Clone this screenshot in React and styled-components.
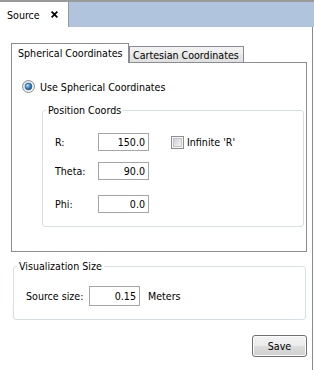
import React from "react";
import styled, { createGlobalStyle } from "styled-components";

const FONT = `"DejaVu Sans Condensed", "Liberation Sans", Arial, sans-serif`;

const GlobalStyle = createGlobalStyle`
  html, body { margin: 0; padding: 0; background: #ffffff; }
  body { font-family: ${FONT}; font-size: 10.6px; color: #000; white-space: nowrap; }
  * { box-sizing: border-box; }
`;

const Window = styled.div`
  width: 314px;
  height: 370px;
  display: flex;
  flex-direction: column;
`;

const Header = styled.div`
  display: flex;
  height: 27px;
  border-top: 2px solid #9a9a9a;
`;

const DocTab = styled.div`
  width: 69px;
  display: flex;
  align-items: center;
  padding-left: 7px;
  background: #ffffff;
  border-right: 1px solid #9a9a9a;
`;

const DocTabTitle = styled.span`
  margin-right: 11px;
`;

const HeaderFill = styled.div`
  flex: 1;
  background: #b0c4de;
`;

const Body = styled.div`
  flex: 1;
  width: 313px;
  border-right: 1px solid #8a8a8a;
  padding: 16px 5px 0 11px;
  display: flex;
  flex-direction: column;
`;

const TabBar = styled.div`
  display: flex;
  align-items: flex-end;
  height: 20px;
  margin-bottom: -1px;
  position: relative;
  z-index: 1;
`;

const Tab = styled.div`
  width: ${(p) => p.$w}px;
  height: ${(p) => (p.$active ? 20 : 17)}px;
  display: flex;
  align-items: center;
  padding-left: ${(p) => (p.$active ? 6 : 3)}px;
  border: 1px solid #898c95;
  border-bottom: ${(p) => (p.$active ? "none" : "1px solid #898c95")};
  background: ${(p) =>
    p.$active ? "#ffffff" : "linear-gradient(#f2f2f2, #ececec 50%, #e6e6e6 51%, #e0e0e0)"};
  padding-bottom: ${(p) => (p.$active ? 1 : 0)}px;
`;

const Pane = styled.div`
  height: 190px;
  border: 1px solid #898c95;
  background: #ffffff;
  padding: 17px 0 0 10px;
  display: flex;
  flex-direction: column;
`;

const RadioRow = styled.label`
  display: flex;
  align-items: center;
  gap: 5px;
  height: 13px;
`;

const Group = styled.fieldset`
  margin: ${(p) => p.$margin};
  padding: 0;
  border: 1px solid #d5dfe5;
  border-radius: 3px;
  min-width: 0;
`;

const Legend = styled.legend`
  margin-left: 3px;
  padding: 0 2px;
  line-height: 13px;
`;

const GroupContent = styled.div`
  padding: ${(p) => p.$pad};
  display: flex;
  flex-direction: column;
`;

const FieldRow = styled.div`
  display: flex;
  align-items: center;
  margin-top: ${(p) => p.$mt || 0}px;
`;

const FieldLabel = styled.span`
  width: ${(p) => p.$w}px;
  flex-shrink: 0;
`;

const SpinBox = styled.div`
  width: ${(p) => p.$w}px;
  height: ${(p) => p.$h}px;
  border: 1px solid #a5a5a5;
  background: #ffffff;
  display: flex;
  align-items: center;
  justify-content: flex-end;
  padding-right: 3px;
`;

const CheckLabel = styled.label`
  display: flex;
  align-items: center;
  gap: 3px;
  margin-left: 22px;
`;

const Unit = styled.span`
  margin-left: 8px;
`;

const Footer = styled.div`
  display: flex;
  justify-content: flex-end;
  margin-top: 15px;
`;

const Button = styled.button`
  width: 55px;
  height: 22px;
  font: inherit;
  color: #000;
  border: 1px solid #707070;
  border-radius: 3px;
  background: linear-gradient(#f2f2f2, #ebebeb 50%, #dddddd 51%, #cfcfcf);
  box-shadow: inset 0 0 0 1px #fcfcfc;
  padding: 0;
`;

const CloseIcon = () => (
  <svg width="7" height="7" viewBox="0 0 7 7">
    <path d="M1.2 1.2 L5.8 5.8 M5.8 1.2 L1.2 5.8" stroke="#000" strokeWidth="1.7" strokeLinecap="square" />
  </svg>
);

const RadioIcon = () => (
  <svg width="13" height="13" viewBox="0 0 13 13">
    <defs>
      <linearGradient id="rbg" x1="0" y1="0" x2="1" y2="1">
        <stop offset="0" stopColor="#d8d8d8" />
        <stop offset="1" stopColor="#ffffff" />
      </linearGradient>
      <radialGradient id="rdot" cx="0.35" cy="0.35" r="0.75">
        <stop offset="0" stopColor="#b6e4fb" />
        <stop offset="0.5" stopColor="#3a8ad0" />
        <stop offset="1" stopColor="#13457e" />
      </radialGradient>
    </defs>
    <circle cx="6.5" cy="6.5" r="6" fill="url(#rbg)" stroke="#8e8f8f" />
    <circle cx="6.5" cy="6.5" r="3.4" fill="url(#rdot)" stroke="#20507f" strokeWidth="0.6" />
  </svg>
);

const CheckIcon = () => (
  <svg width="13" height="13" viewBox="0 0 13 13">
    <defs>
      <linearGradient id="cbg" x1="0" y1="0" x2="1" y2="1">
        <stop offset="0" stopColor="#cbcfd5" />
        <stop offset="1" stopColor="#f6f6f6" />
      </linearGradient>
    </defs>
    <rect x="0.5" y="0.5" width="12" height="12" fill="#f4f4f4" stroke="#8e8f8f" />
    <rect x="2.5" y="2.5" width="8" height="8" fill="url(#cbg)" stroke="#b9bcc1" strokeWidth="0.8" />
  </svg>
);

export default function App() {
  return (
    <>
      <GlobalStyle />
      <Window>
        <Header>
          <DocTab>
            <DocTabTitle>Source</DocTabTitle>
            <CloseIcon />
          </DocTab>
          <HeaderFill />
        </Header>
        <Body>
          <TabBar>
            <Tab $active $w={118}>Spherical Coordinates</Tab>
            <Tab $w={115}>Cartesian Coordinates</Tab>
          </TabBar>
          <Pane>
            <RadioRow>
              <RadioIcon />
              <span>Use Spherical Coordinates</span>
            </RadioRow>
            <Group $margin="11px 2px 0 20px">
              <Legend>Position Coords</Legend>
              <GroupContent $pad="16px 0 13px 12px">
                <FieldRow>
                  <FieldLabel $w={43}>R:</FieldLabel>
                  <SpinBox $w={51} $h={18}>150.0</SpinBox>
                  <CheckLabel>
                    <CheckIcon />
                    <span>Infinite 'R'</span>
                  </CheckLabel>
                </FieldRow>
                <FieldRow $mt={11}>
                  <FieldLabel $w={43}>Theta:</FieldLabel>
                  <SpinBox $w={51} $h={18}>90.0</SpinBox>
                </FieldRow>
                <FieldRow $mt={15}>
                  <FieldLabel $w={43}>Phi:</FieldLabel>
                  <SpinBox $w={51} $h={18}>0.0</SpinBox>
                </FieldRow>
              </GroupContent>
            </Group>
          </Pane>
          <Group $margin="8px 1px 0 2px">
            <Legend>Visualization Size</Legend>
            <GroupContent $pad="13px 0 13px 12px">
              <FieldRow>
                <FieldLabel $w={63}>Source size:</FieldLabel>
                <SpinBox $w={51} $h={20}>0.15</SpinBox>
                <Unit>Meters</Unit>
              </FieldRow>
            </GroupContent>
          </Group>
          <Footer>
            <Button>Save</Button>
          </Footer>
        </Body>
      </Window>
    </>
  );
}
